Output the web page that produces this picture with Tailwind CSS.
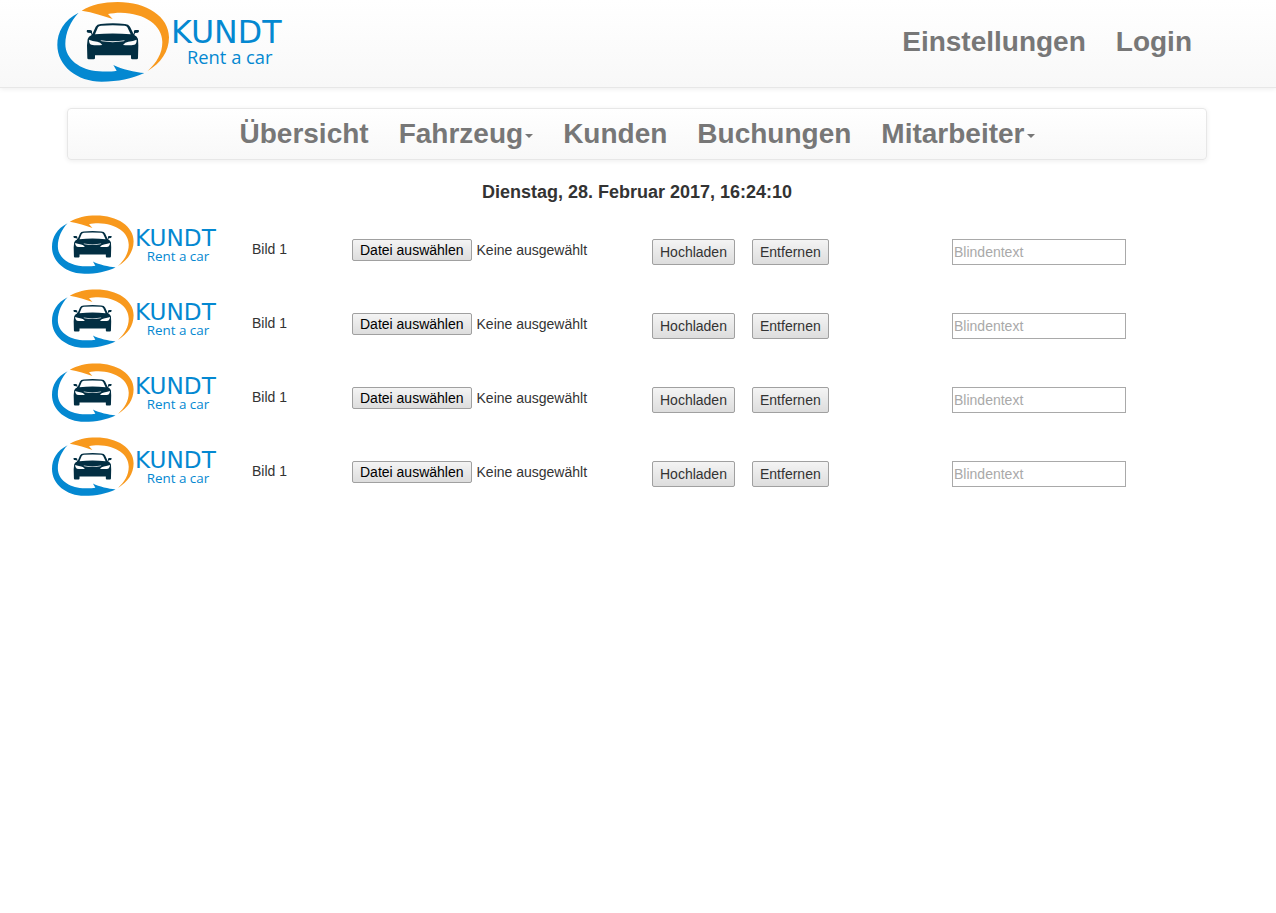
<!DOCTYPE html>
<html lang="de">
<head>
<meta charset="utf-8">
<meta name="viewport" content="width=device-width, initial-scale=1">
<title>KUNDT Rent a car</title>
<script src="https://cdn.jsdelivr.net/npm/@tailwindcss/browser@4"></script>
</head>
<body class="min-h-screen bg-white font-['Liberation_Sans',Arial,sans-serif] text-sm leading-5 text-[#333]">

<!-- Shared logo drawing -->
<svg class="hidden" aria-hidden="true">
  <symbol id="logo" viewBox="18 0 702 246">
    <path fill="#f8991d" d="M95 32C125 14 160 6 203 6C290 6 357 50 357 112C357 155 332 190 293 213C320 188 337 160 337 126C337 76 285 39 212 38C198 38 184 40 174 42L188 57C160 48 130 37 95 32Z"/>
    <path fill="#0488d1" d="M86 38C42 60 22 95 22 135C22 198 82 245 155 245C205 245 245 236 283 219C255 217 215 208 190 195L200 212C185 215 165 215 147 214C90 210 46 178 46 132C46 98 62 62 86 38Z"/>
    <path fill="#022e42" fill-rule="evenodd" d="M127 103L137 80Q141 73 152 72Q189 68 225 72Q236 73 240 80L251 103L252 97Q250 90 257 90H266Q269 95 264 98L255 99L253 105Q262 109 264 117L265 136L264 174Q264 178 260 178H247Q243 178 243 174V166H135V174Q135 178 131 178H116Q112 178 112 174L111 136L113 117Q115 109 125 105L123 99L113 98Q108 95 111 90H120Q127 90 126 97ZM144 82L135 103Q188 98 242 103L232 82Q230 78 224 77Q188 74 153 77Q146 78 144 82ZM117 119Q117 132 124 134Q137 137 157 135Q151 126 142 125Q127 123 117 119ZM260 119Q260 132 253 134Q240 137 219 135Q225 126 235 125Q250 123 260 119ZM151 121Q188 127 225 121L221 124Q188 129 155 124Z"/>
    <g fill="#0488d1">
      <text x="363" y="130" font-size="95" font-family="'DejaVu Sans',sans-serif">KUNDT</text>
      <text x="411" y="192" font-size="55" font-family="'Open Sans','Noto Sans',sans-serif">Rent a car</text>
    </g>
  </symbol>
</svg>

<header class="border-b border-[#e7e7e7] bg-linear-to-b from-white to-[#f8f8f8] shadow-[0_1px_5px_rgba(0,0,0,0.075)]">
  <div class="flex items-start justify-between pt-0.5 pr-[69px] pb-[5px] pl-14">
    <a href="#" aria-label="KUNDT Rent a car"><svg class="block h-20 w-[234px]" role="img" viewBox="18 6 702 240"><title>KUNDT Rent a car</title><use href="#logo" x="18" y="0" width="702" height="246"/></svg></a>
    <nav class="flex pt-6 text-[28px] leading-8 font-bold text-[#777]" aria-label="Konto">
      <a href="#" class="px-[15px]">Einstellungen</a>
      <a href="#" class="px-[15px]">Login</a>
    </nav>
  </div>
</header>

<div class="pr-0.5">
  <nav class="mx-auto mt-5 flex max-w-[1140px] justify-center rounded border border-[#e7e7e7] bg-linear-to-b from-white to-[#f8f8f8] py-[9px] text-[28px] leading-8 font-bold text-[#777] shadow-[0_1px_5px_rgba(0,0,0,0.075)]" aria-label="Hauptmenü">
    <a href="#" class="px-[15px]">Übersicht</a>
    <a href="#" class="flex items-center gap-0.5 px-[15px]">Fahrzeug<span class="mt-1 border-x-4 border-t-4 border-x-transparent border-t-[#777]"></span></a>
    <a href="#" class="px-[15px]">Kunden</a>
    <a href="#" class="px-[15px]">Buchungen</a>
    <a href="#" class="flex items-center gap-0.5 px-[15px]">Mitarbeiter<span class="mt-1 border-x-4 border-t-4 border-x-transparent border-t-[#777]"></span></a>
  </nav>
  <p class="mt-[22px] text-center text-lg leading-5 font-bold">Dienstag, 28. Februar 2017, 16:24:10</p>
</div>

<main class="mt-3 px-[52px]">
  <table class="w-full table-fixed">
    <colgroup><col class="w-[200px]"><col class="w-[100px]"><col class="w-[300px]"><col class="w-[100px]"><col class="w-[200px]"><col></colgroup>
    <tbody id="rows">
      <tr class="h-[74px] align-top">
        <td><svg class="block h-[60px] w-[171px]" role="img" aria-label="Vorschau" viewBox="4 0 702 246"><use href="#logo" width="702" height="246"/></svg></td>
        <td class="pt-[25px]">Bild 1</td>
        <td class="pt-[25px]">
          <label class="flex items-center gap-[5px]"><input type="file" class="sr-only"><span class="rounded-[2px] border border-[#a0a0a0] bg-linear-to-b from-[#f4f4f4] to-[#dddddd] px-[7px] text-black">Datei auswählen</span><span>Keine ausgewählt</span></label>
        </td>
        <td class="pt-[25px]"><button type="button" class="block rounded-[2px] border border-[#a0a0a0] bg-linear-to-b from-[#f4f4f4] to-[#dddddd] px-[7px] py-0.5">Hochladen</button></td>
        <td class="pt-[25px]"><button type="button" class="block rounded-[2px] border border-[#a0a0a0] bg-linear-to-b from-[#f4f4f4] to-[#dddddd] px-[7px] py-0.5">Entfernen</button></td>
        <td class="pt-[25px]"><input type="text" aria-label="Blindentext" placeholder="Blindentext" class="block h-[26px] w-[174px] border border-[#a9a9a9] bg-white px-px placeholder:text-[#a9a9a9]"></td>
      </tr>
    </tbody>
  </table>
</main>

<script>
  // Four identical upload rows
  const rows = document.getElementById('rows');
  const first = rows.firstElementChild;
  for (let i = 1; i < 4; i++) rows.appendChild(first.cloneNode(true));
</script>
</body>
</html>
